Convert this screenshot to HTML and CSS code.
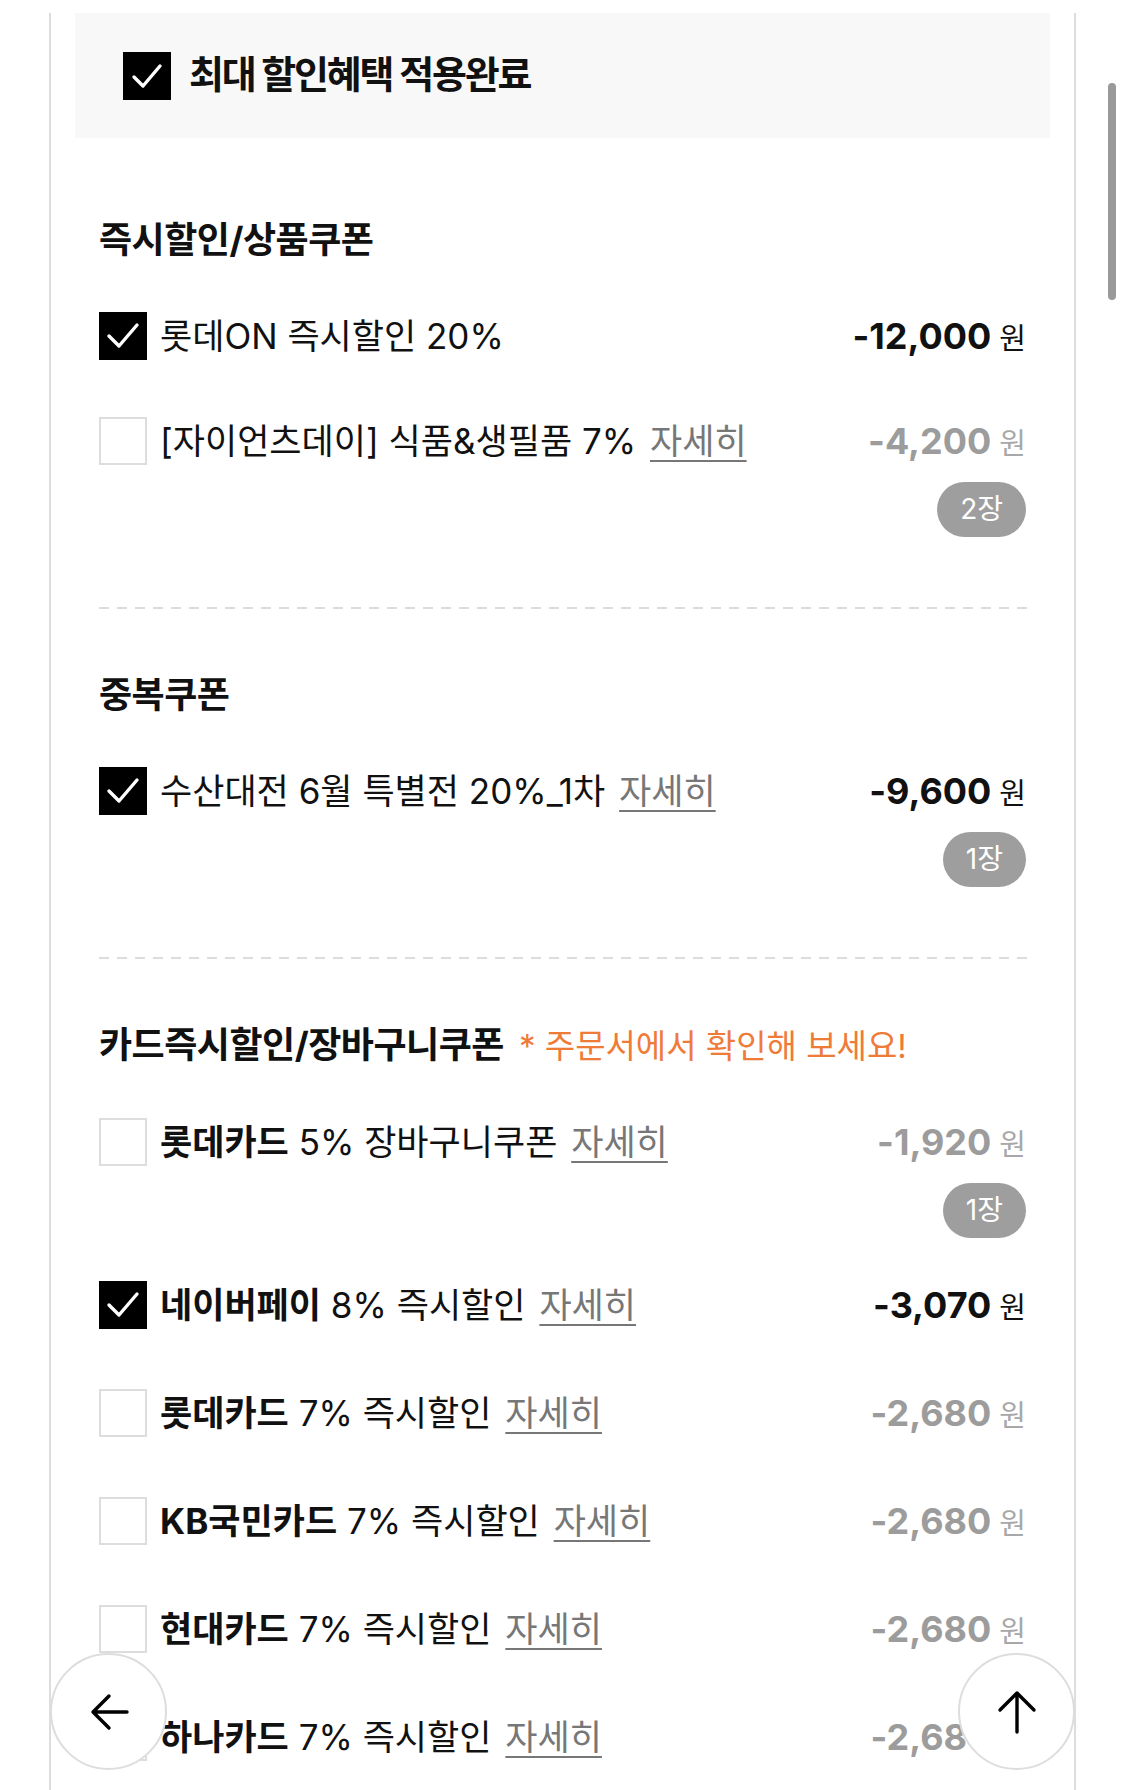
FILE: index.html
```html
<!DOCTYPE html>
<html lang="ko">
<head>
    <meta charset="UTF-8">
    <meta name="viewport" content="width=device-width, initial-scale=1.0">
    <title>할인혜택</title>
    <link rel="stylesheet" href="styles.css">
</head>
<body>
    <div class="panel">
        <div class="summary">
            <span class="check on big">
                <svg viewBox="0 0 48 48"><polyline points="11,25 20,34 37,14"/></svg>
            </span>
            <h2>최대 할인혜택 적용완료</h2>
        </div>

        <section class="group">
            <h3 class="group-title">즉시할인/상품쿠폰</h3>

            <div class="item tight">
                <div class="row">
                    <span class="check on"><svg viewBox="0 0 48 48"><polyline points="10,24 20,34 38,13"/></svg></span>
                    <p class="name">롯데ON 즉시할인 20%</p>
                    <p class="amount">-12,000<span class="won">원</span></p>
                </div>
            </div>

            <div class="item has-badge">
                <div class="row">
                    <span class="check"></span>
                    <p class="name">[자이언츠데이] 식품&amp;생필품 7% <a href="#" class="more">자세히</a></p>
                    <p class="amount off">-4,200<span class="won">원</span></p>
                </div>
                <span class="badge">2장</span>
            </div>
        </section>

        <section class="group">
            <h3 class="group-title">중복쿠폰</h3>

            <div class="item has-badge">
                <div class="row">
                    <span class="check on"><svg viewBox="0 0 48 48"><polyline points="10,24 20,34 38,13"/></svg></span>
                    <p class="name">수산대전 6월 특별전 20%_1차 <a href="#" class="more">자세히</a></p>
                    <p class="amount">-9,600<span class="won">원</span></p>
                </div>
                <span class="badge">1장</span>
            </div>
        </section>

        <section class="group last">
            <h3 class="group-title">카드즉시할인/장바구니쿠폰 <span class="note">* 주문서에서 확인해 보세요!</span></h3>

            <div class="item has-badge">
                <div class="row">
                    <span class="check"></span>
                    <p class="name"><b>롯데카드</b> 5% 장바구니쿠폰 <a href="#" class="more">자세히</a></p>
                    <p class="amount off">-1,920<span class="won">원</span></p>
                </div>
                <span class="badge">1장</span>
            </div>

            <div class="item">
                <div class="row">
                    <span class="check on"><svg viewBox="0 0 48 48"><polyline points="10,24 20,34 38,13"/></svg></span>
                    <p class="name"><b>네이버페이</b> 8% 즉시할인 <a href="#" class="more">자세히</a></p>
                    <p class="amount">-3,070<span class="won">원</span></p>
                </div>
            </div>

            <div class="item">
                <div class="row">
                    <span class="check"></span>
                    <p class="name"><b>롯데카드</b> 7% 즉시할인 <a href="#" class="more">자세히</a></p>
                    <p class="amount off">-2,680<span class="won">원</span></p>
                </div>
            </div>

            <div class="item">
                <div class="row">
                    <span class="check"></span>
                    <p class="name"><b>KB국민카드</b> 7% 즉시할인 <a href="#" class="more">자세히</a></p>
                    <p class="amount off">-2,680<span class="won">원</span></p>
                </div>
            </div>

            <div class="item">
                <div class="row">
                    <span class="check"></span>
                    <p class="name"><b>현대카드</b> 7% 즉시할인 <a href="#" class="more">자세히</a></p>
                    <p class="amount off">-2,680<span class="won">원</span></p>
                </div>
            </div>

            <div class="item">
                <div class="row">
                    <span class="check"></span>
                    <p class="name"><b>하나카드</b> 7% 즉시할인 <a href="#" class="more">자세히</a></p>
                    <p class="amount off">-2,680<span class="won">원</span></p>
                </div>
            </div>
        </section>
    </div>

    <button class="float-btn back" aria-label="뒤로">
        <svg viewBox="0 0 48 48"><path d="M8 24H42M8 24L24 8M8 24L24 40"/></svg>
    </button>
    <button class="float-btn top" aria-label="맨 위로">
        <svg viewBox="0 0 48 48"><path d="M24 5V44M24 5L7 22M24 5L41 22"/></svg>
    </button>
    <div class="scroll-thumb"></div>
</body>
</html>
```

FILE: styles.css
```css
html, body {
    overflow: hidden;
}

body {
    margin: 0;
    font-family: 'Inter', 'Noto Sans CJK KR', sans-serif;
    color: #111;
    background-color: #fff;
}

.panel {
    width: 1023px;
    min-height: 100vh;
    margin-left: 49px;
    border-left: 2px solid #ddd;
    border-right: 2px solid #ddd;
}

.summary {
    display: flex;
    align-items: center;
    gap: 18px;
    height: 125px;
    margin: 13px 24px 16px;
    padding-left: 48px;
    background-color: #f8f8f8;
}

.summary h2 {
    margin: 0;
    padding-bottom: 8px;
    font-size: 38px;
    font-weight: 700;
    letter-spacing: -2.2px;
}

.group {
    position: relative;
    padding: 62px 48px 72px;
}

.group::after {
    content: '';
    position: absolute;
    left: 48px;
    right: 47px;
    bottom: 0;
    height: 2px;
    background: repeating-linear-gradient(to right, #dcdcdc 0 10px, transparent 10px 18px);
}

.group.last::after {
    display: none;
}

.group-title {
    margin: 0 0 48px;
    font-size: 36px;
    line-height: 48px;
    font-weight: 700;
    letter-spacing: -0.5px;
}

.note {
    margin-left: 7px;
    font-size: 33px;
    font-weight: 400;
    letter-spacing: 0;
    color: #ef7b38;
}

.item {
    display: flex;
    flex-direction: column;
    margin-bottom: 60px;
}

.item.tight {
    margin-bottom: 57px;
}

.item.has-badge {
    margin-bottom: 43px;
}

.group .item:last-child {
    margin-bottom: 0;
}

.row {
    display: flex;
    align-items: center;
    height: 48px;
}

.check {
    flex: none;
    box-sizing: border-box;
    width: 48px;
    height: 48px;
    margin-right: 13px;
    border: 2px solid #ddd;
    background-color: #fff;
}

.check.on {
    border: none;
    background-color: #000;
}

.check.big {
    margin-right: 0;
}

.check svg {
    display: block;
    width: 48px;
    height: 48px;
}

.check polyline {
    fill: none;
    stroke: #fff;
    stroke-width: 3.4;
    stroke-linecap: round;
    stroke-linejoin: round;
}

.name {
    flex: 1;
    margin: 0;
    font-size: 35px;
    line-height: 48px;
    white-space: nowrap;
}

.name b {
    font-weight: 700;
}

.more {
    margin-left: 4px;
    color: #777;
    text-decoration: underline;
    text-decoration-thickness: 2px;
    text-underline-offset: 6px;
}

.amount {
    margin: 0;
    font-size: 36px;
    font-weight: 700;
    white-space: nowrap;
}

.amount.off {
    color: #9c9c9c;
}

.won {
    margin-left: 8px;
    font-size: 29px;
    font-weight: 400;
}

.amount.off .won {
    color: #a8a8a8;
}

.badge {
    align-self: flex-end;
    margin-top: 17px;
    padding: 0 23px;
    height: 55px;
    line-height: 55px;
    border-radius: 28px;
    background-color: #9e9e9e;
    color: #fff;
    font-size: 28px;
}

.float-btn {
    position: fixed;
    bottom: 20px;
    width: 117px;
    height: 117px;
    padding: 0;
    border: 2px solid #ddd;
    border-radius: 50%;
    background-color: #fff;
    display: flex;
    align-items: center;
    justify-content: center;
    cursor: pointer;
}

.float-btn.back {
    left: 50px;
}

.float-btn.top {
    left: 958px;
}

.float-btn svg {
    width: 48px;
    height: 48px;
}

.float-btn path {
    fill: none;
    stroke: #000;
    stroke-width: 3.4;
    stroke-linecap: round;
    stroke-linejoin: round;
}

.scroll-thumb {
    position: fixed;
    left: 1108px;
    top: 83px;
    width: 8px;
    height: 217px;
    border-radius: 4px;
    background-color: #999;
}
```
